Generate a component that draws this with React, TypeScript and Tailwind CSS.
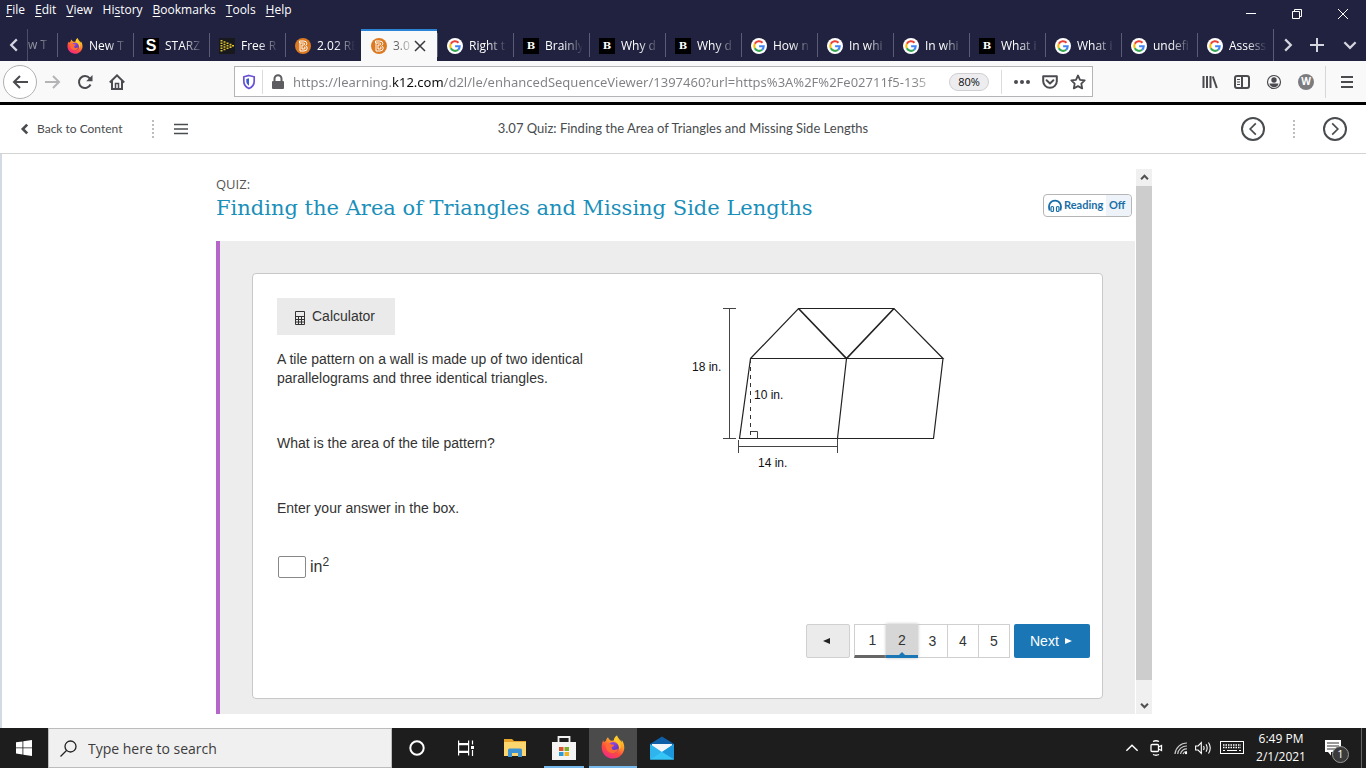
import React from 'react';

type IconName = 'firefox' | 'starz' | 'free' | 'brainorange' | 'google' | 'brainly';

function FirefoxIcon({ size }: { size: number }) {
  const id = `ff${size}`;
  return (
    <svg width={size} height={size} viewBox="0 0 24 24" aria-hidden="true" className="shrink-0">
      <defs>
        <linearGradient id={`${id}a`} x1="0.8" y1="0" x2="0.25" y2="1">
          <stop offset="0" stopColor="#ffe226" />
          <stop offset="0.35" stopColor="#ff9a2a" />
          <stop offset="0.65" stopColor="#ff4a3e" />
          <stop offset="1" stopColor="#f0278f" />
        </linearGradient>
        <linearGradient id={`${id}b`} x1="0" y1="0" x2="0.6" y2="1">
          <stop offset="0" stopColor="#a34be8" />
          <stop offset="1" stopColor="#5a35c0" />
        </linearGradient>
      </defs>
      <path
        d="M2.2 5.2c-1 2.3-1.600 4.600-1.500 7.300C.8 18.800 5.800 23.600 12 23.600S23.300 18.700 23.300 12.600c0-3.500-1.300-6-2.700-7.600l.3 2.300C19.700 4.700 17 3.600 16 .4c-1.800 1-3 3-3.200 5.200l-2.400.2C8.600 5 7.400 3.800 7 2.200 5.900 3 5.300 4.200 5 5.800L2.900 7.300z"
        fill={`url(#${id}a)`}
      />
      <circle cx="12.200" cy="12.600" r="5.600" fill={`url(#${id}b)`} />
      <path
        d="M4.300 9.300c2.200-1.600 4.600-1.400 5.900.1 1 .2 2.300 0 3 .5-.2 1.300-1.800 1.700-2.500 2.300-.3 1.700.9 2.900 2.700 2.700 1.600-.2 2.700-1 3.800-.5-1 2.600-3.100 3.900-5.600 3.800-4-.1-6.900-3-7.300-8.900z"
        fill="#ff6a35"
      />
      <path d="M16 .4c-.8 4 3.600 5.600 3.700 10.200.1 2.200-.8 3.500-1.600 4.300 1-4.300-1.500-7.600-5.300-9.300C13 3.400 14.200 1.400 16 .4z" fill="#ffc92b" />
    </svg>
  );
}

function TabIcon({ name }: { name: IconName }) {
  switch (name) {
    case 'firefox':
      return <FirefoxIcon size={16} />;
    case 'google':
      return (
        <svg width="16" height="16" viewBox="0 0 16 16" aria-hidden="true" className="shrink-0">
          <circle cx="8" cy="8" r="8" fill="#fff" />
          <g fill="none" strokeWidth="2.100">
            <path d="M11.500 4.700A4.800 4.800 0 0 0 3.800 5.700" stroke="#ea4335" />
            <path d="M3.800 5.700a4.800 4.800 0 0 0 0 4.600" stroke="#fbbc05" />
            <path d="M3.800 10.300a4.800 4.800 0 0 0 7.300 1.400" stroke="#34a853" />
            <path d="M11.100 11.700A4.800 4.800 0 0 0 12.700 8.200H8.100" stroke="#4285f4" />
          </g>
        </svg>
      );
    case 'starz':
      return (
        <span className="flex h-4 w-4 shrink-0 items-center justify-center bg-black font-['Liberation_Sans',Arial,sans-serif] text-[16px] leading-4 font-bold text-white">
          S
        </span>
      );
    case 'brainly':
      return (
        <span className="flex h-4 w-4 shrink-0 items-center justify-center bg-black font-['DejaVu_Serif',serif] text-[10px] leading-4 font-bold text-white">
          B
        </span>
      );
    case 'brainorange':
      return (
        <svg width="16" height="16" viewBox="0 0 16 16" aria-hidden="true" className="shrink-0">
          <circle cx="8" cy="8" r="8" fill="#dc7a22" />
          <path
            d="M4.500 5V3h4.300q3 0 3 2.500 0 1.500-1.200 2.200 1.600.8 1.600 2.500 0 2.800-3.200 2.800H5V5h3.600q1 0 1 1t-1 1H7v4h2q1.200 0 1.200-1T9 9"
            fill="none"
            stroke="#fff"
            strokeWidth="1"
          />
        </svg>
      );
    case 'free':
      return (
        <svg width="16" height="16" viewBox="0 0 16 16" aria-hidden="true" className="shrink-0">
          <rect width="16" height="16" fill="#17191d" />
          <path
            d="M2.500 2v12M5.500 3.200v9.600M8.500 4.500v7M11.500 5.800v4.500M14 7v2"
            stroke="#e0bf2c"
            strokeWidth="2"
            strokeDasharray="1.600 0.900"
          />
        </svg>
      );
  }
}

const tabs: { icon: IconName; label: string; active?: boolean }[] = [
  { icon: 'firefox', label: 'New T' },
  { icon: 'starz', label: 'STARZ' },
  { icon: 'free', label: 'Free R' },
  { icon: 'brainorange', label: '2.02 RE' },
  { icon: 'brainorange', label: '3.0', active: true },
  { icon: 'google', label: 'Right t' },
  { icon: 'brainly', label: 'Brainly' },
  { icon: 'brainly', label: 'Why d' },
  { icon: 'brainly', label: 'Why d' },
  { icon: 'google', label: 'How n' },
  { icon: 'google', label: 'In whi' },
  { icon: 'google', label: 'In whi' },
  { icon: 'brainly', label: 'What i' },
  { icon: 'google', label: 'What i' },
  { icon: 'google', label: 'undefi' },
  { icon: 'google', label: 'Assess' },
];

const menus = [
  ['', 'F', 'ile'],
  ['', 'E', 'dit'],
  ['', 'V', 'iew'],
  ['Hi', 's', 'tory'],
  ['', 'B', 'ookmarks'],
  ['', 'T', 'ools'],
  ['', 'H', 'elp'],
];

function Chevron({ dir, size, width = 2 }: { dir: 'left' | 'right' | 'up' | 'down'; size: number; width?: number }) {
  const d = {
    left: 'M10.500 3L5.500 8l5 5',
    right: 'M5.500 3l5 5-5 5',
    up: 'M3 10.500l5-5 5 5',
    down: 'M3 5.500l5 5 5-5',
  }[dir];
  return (
    <svg width={size} height={size} viewBox="0 0 16 16" fill="none" stroke="currentColor" strokeWidth={width} aria-hidden="true">
      <path d={d} />
    </svg>
  );
}

function TitleBar() {
  return (
    <div className="flex h-[29px] items-start justify-between text-white">
      <nav className="flex gap-[10px] pl-[6px] text-[12px] leading-5" aria-label="Menu bar">
        {menus.map(([pre, key, post]) => (
          <button key={key + post} type="button">
            {pre}
            <span className="underline underline-offset-2">{key}</span>
            {post}
          </button>
        ))}
      </nav>
      <div className="flex h-7">
        <button type="button" aria-label="Minimize" className="flex w-[46px] items-center justify-center">
          <svg width="10" height="10" viewBox="0 0 10 10" stroke="#fff"><path d="M0 4.500h10" /></svg>
        </button>
        <button type="button" aria-label="Restore" className="flex w-[46px] items-center justify-center">
          <svg width="10" height="10" viewBox="0 0 10 10" stroke="#fff" fill="none"><path d="M.5 2.500h7v7h-7zM2.500 2.500v-2h7v7h-2" /></svg>
        </button>
        <button type="button" aria-label="Close" className="flex w-[46px] items-center justify-center">
          <svg width="10" height="10" viewBox="0 0 10 10" stroke="#fff"><path d="M0 0l10 10M10 0L0 10" /></svg>
        </button>
      </div>
    </div>
  );
}

function TabStrip() {
  return (
    <div className="flex h-8 text-[12px] text-white">
      <button type="button" aria-label="Scroll tabs left" className="flex w-7 items-center justify-center border-r border-[#4c4e68] text-[#d5d5df]">
        <Chevron dir="left" size={18} />
      </button>
      <button type="button" className="flex w-[29px] items-center whitespace-nowrap mask-[linear-gradient(to_right,#0006,#0009_40%,transparent_75%)]">
        w T
      </button>
      <div className="flex min-w-0 flex-1">
        {tabs.map((tab, i) =>
          tab.active ? (
            <div key={i} className="flex max-w-[76px] min-w-0 flex-1 items-center border-t-2 border-[#2b83d6] bg-[#f9f9fa] pl-[10px] text-[#38383d]">
              <TabIcon name={tab.icon} />
              <button type="button" className="ml-[6px] w-[18px] text-left whitespace-nowrap mask-[linear-gradient(to_right,#000c_20%,#0003)]">
                {tab.label}
              </button>
              <button type="button" aria-label="Close tab" className="ml-[3px]">
                <svg width="12" height="12" viewBox="0 0 12 12" stroke="#38383d" strokeWidth="1.500"><path d="M1 1l10 10M11 1L1 11" /></svg>
              </button>
            </div>
          ) : (
            <button
              key={i}
              type="button"
              className="flex max-w-[76px] min-w-0 flex-1 items-center gap-[6px] bg-[linear-gradient(#5a5c76,#5a5c76)] bg-[length:1px_24px] bg-[position:0_4px] bg-no-repeat pt-px pl-[10px]"
            >
              <TabIcon name={tab.icon} />
              <span className="min-w-0 flex-1 text-left whitespace-nowrap mask-[linear-gradient(to_right,black_18px,transparent_38px)]">
                {tab.label}
              </span>
            </button>
          ),
        )}
      </div>
      <div className="flex w-[93px] items-center border-l border-[#5a5c76] pl-[5px] text-[#d5d5df]">
        <button type="button" aria-label="Scroll tabs right"><Chevron dir="right" size={18} /></button>
        <button type="button" aria-label="New tab" className="ml-[13px]">
          <svg width="14" height="14" viewBox="0 0 14 14" stroke="currentColor" strokeWidth="2"><path d="M0 7h14M7 0v14" /></svg>
        </button>
        <button type="button" aria-label="List all tabs" className="ml-[17px]"><Chevron dir="down" size={18} /></button>
      </div>
    </div>
  );
}

function NavBar() {
  return (
    <div className="flex h-[41px] items-center bg-[#f9f9fa] text-[#4a4a4f]">
      <div className="flex w-[234px] shrink-0 items-center pl-[3px]">
        <button type="button" aria-label="Back" className="flex h-[34px] w-[34px] items-center justify-center rounded-full border border-[#b1b1b5] bg-white">
          <svg width="16" height="16" viewBox="0 0 16 16" fill="none" stroke="currentColor" strokeWidth="2"><path d="M16 8H2M8 2L2 8l6 6" /></svg>
        </button>
        <button type="button" aria-label="Forward" className="ml-2 text-[#b5b5b8]">
          <svg width="16" height="16" viewBox="0 0 16 16" fill="none" stroke="currentColor" strokeWidth="2"><path d="M0 8h14M8 2l6 6-6 6" /></svg>
        </button>
        <button type="button" aria-label="Reload" className="ml-4">
          <svg width="16" height="16" viewBox="0 0 16 16" fill="none" stroke="currentColor" strokeWidth="2"><path d="M13.500 10.500A6 6 0 1 1 12.700 4.300L14 5.800" /><path d="M15.500 1v6.200H9.200z" fill="currentColor" stroke="none" /></svg>
        </button>
        <button type="button" aria-label="Home" className="ml-4">
          <svg width="16" height="16" viewBox="0 0 16 16" fill="none" stroke="currentColor" strokeWidth="2"><path d="M.8 8.500L8 1.400l7.200 7.100M3 7v8h10V7" /><path d="M6.500 14.500v-5h3v5" strokeWidth="1.500" /></svg>
        </button>
      </div>
      <div className="flex h-[31px] min-w-0 flex-1 items-center border border-[#b4b4b8] bg-white">
        <button type="button" aria-label="Tracking protection" className="flex h-6 w-7 items-center justify-center border-r border-[#dcdce0]">
          <svg width="14" height="16" viewBox="0 0 14 16" fill="none"><path d="M7 1.500l5.200 1.300v4.400c0 3.500-2.200 6-5.200 7.300-3-1.300-5.200-3.800-5.200-7.300V2.800z" stroke="#6950d6" strokeWidth="1.700" /><path d="M7 4.200l-2.700.7v2.400c0 2 1 3.400 2.700 4.400z" fill="#3a5bd0" /></svg>
        </button>
        <svg width="14" height="16" viewBox="0 0 14 16" className="ml-2 shrink-0" aria-hidden="true"><path d="M3.500 8V4.800a3.500 3.500 0 0 1 7 0V8" fill="none" stroke="#5c5c61" strokeWidth="2" /><rect x="1" y="7" width="12" height="8" rx="1" fill="#5c5c61" /></svg>
        <input
          aria-label="Address"
          defaultValue="https://learning.k12.com/d2l/le/enhancedSequenceViewer/1397460?url=https%3A%2F%2Fe02711f5-135"
          className="ml-2 h-7 min-w-0 flex-1 bg-[linear-gradient(to_right,#808084_98px,#0c0c0d_98px,#0c0c0d_150px,#808084_150px,#808084_620px,#fff_650px)] bg-clip-text font-['Noto_Sans',sans-serif] text-[13px] text-transparent outline-none"
        />
        <button type="button" className="ml-2 h-[18px] w-10 rounded-full border border-[#cfcfd3] bg-[#ededf0] text-[11px] leading-4 text-[#0c0c0d]">80%</button>
        <div className="ml-3 flex h-6 items-center border-l border-[#dcdce0] pl-3">
          <button type="button" aria-label="Page actions"><svg width="16" height="16" viewBox="0 0 16 16" fill="currentColor"><circle cx="2" cy="8" r="2" /><circle cx="8" cy="8" r="2" /><circle cx="14" cy="8" r="2" /></svg></button>
          <button type="button" aria-label="Save to Pocket" className="ml-3"><svg width="16" height="16" viewBox="0 0 16 16" fill="none" stroke="currentColor" strokeWidth="2"><path d="M1.200 2.300h13.600v5a6.800 6.500 0 0 1-13.600 0zM4.600 6.300L8 9.500l3.400-3.200" strokeLinejoin="round" strokeLinecap="round" /></svg></button>
          <button type="button" aria-label="Bookmark this page" className="mr-[6px] ml-3"><svg width="16" height="16" viewBox="0 0 16 16" fill="none" stroke="currentColor" strokeWidth="1.800"><path d="M8 1.500l2 4.300 4.700.6-3.400 3.200.9 4.800L8 12.100l-4.200 2.300.9-4.800L1.300 6.400 6 5.800z" strokeLinejoin="round" /></svg></button>
        </div>
      </div>
      <div className="flex w-[273px] shrink-0 items-center justify-end pr-3">
        <div className="flex items-center gap-4">
          <button type="button" aria-label="Library"><svg width="16" height="16" viewBox="0 0 16 16" stroke="currentColor" strokeWidth="2"><path d="M1.500 2v12M5 2v12M8.500 2v12M10.800 2.500l4 11.500" /></svg></button>
          <button type="button" aria-label="Sidebars"><svg width="16" height="16" viewBox="0 0 16 16" fill="none" stroke="currentColor" strokeWidth="2"><rect x="1" y="2" width="14" height="12" rx="2" /><path d="M8 2v12" /><path d="M3 5.500h3M3 8h3M3 10.500h3" strokeWidth="1" /></svg></button>
          <button type="button" aria-label="Account"><svg width="16" height="16" viewBox="0 0 16 16"><circle cx="8" cy="8" r="6.500" fill="none" stroke="currentColor" strokeWidth="1.200" /><circle cx="8" cy="6" r="2.700" fill="currentColor" /><path d="M3.500 9.500h9c-.4 2.500-2.200 3.700-4.500 3.700s-4.100-1.200-4.500-3.700z" fill="currentColor" /></svg></button>
          <button type="button" aria-label="Profile" className="flex h-4 w-4 items-center justify-center rounded-full bg-[#7c7c7f] text-[10px] font-bold text-white">W</button>
        </div>
        <div className="ml-[11px] flex h-8 items-center border-l border-[#d7d7db] pl-[14px]">
          <button type="button" aria-label="Open menu"><svg width="14" height="14" viewBox="0 0 14 14" stroke="currentColor" strokeWidth="2"><path d="M1 2h12M1 7h12M1 12h12" /></svg></button>
        </div>
      </div>
    </div>
  );
}

function Dots() {
  return <span className="h-[18px] border-l-2 border-dotted border-[#bdbdbd]" aria-hidden="true" />;
}

function CourseHeader() {
  return (
    <header className="grid h-[49px] grid-cols-[1fr_auto_1fr] items-center border-b border-[#d3d3d3] bg-white font-['Lato',sans-serif] text-[#494c4e] shadow-[0_1px_4px_rgba(0,0,0,0.08)]">
      <div className="flex items-center pl-[18px]">
        <a href="#content" className="flex items-center gap-[5px] text-[12px]">
          <Chevron dir="left" size={14} width={3} />
          Back to Content
        </a>
        <span className="ml-[29px] flex"><Dots /></span>
        <button type="button" aria-label="Show outline" className="ml-5">
          <svg width="14" height="12" viewBox="0 0 14 12" stroke="currentColor" strokeWidth="1.500"><path d="M0 1.500h14M0 6h14M0 10.500h14" /></svg>
        </button>
      </div>
      <h1 className="text-[13px]">3.07 Quiz: Finding the Area of Triangles and Missing Side Lengths</h1>
      <div className="flex items-center justify-end gap-7 pr-[19px]">
        <button type="button" aria-label="Previous activity" className="flex h-6 w-6 items-center justify-center rounded-full border-2 border-[#494c4e]"><Chevron dir="left" size={18} width={1.500} /></button>
        <Dots />
        <button type="button" aria-label="Next activity" className="flex h-6 w-6 items-center justify-center rounded-full border-2 border-[#494c4e]"><Chevron dir="right" size={18} width={1.500} /></button>
      </div>
    </header>
  );
}

function TileFigure() {
  return (
    <svg width="280" height="184" viewBox="678 298 280 184" role="img" aria-label="Tile pattern" fill="none" stroke="#222" strokeWidth="1.200">
      <path d="M750.500 358.500L798.500 308.500H894L943 358.500H750.500L739.500 438.500H933.500L943 358.500M846.500 358.500L837.500 438.500" />
      <path d="M798.500 308.500L846.500 358.500L894 308.500" strokeWidth="1.700" />
      <path d="M723 308.500h13M723 438.500h13M729.500 308.500v130M738.500 440v13M837.500 438.500v14.500M738.500 446.500h99M750.500 431.500h7v7" strokeWidth="1" stroke="#444" />
      <path d="M750.500 359v80" strokeWidth="1" strokeDasharray="4 4" stroke="#333" />
      <g fill="#111" stroke="none" className="font-['Liberation_Sans',Arial,sans-serif] text-[12px]">
        <text x="692" y="371">18 in.</text>
        <text x="754" y="399">10 in.</text>
        <text x="758" y="467">14 in.</text>
      </g>
    </svg>
  );
}

function Pager() {
  return (
    <nav className="flex h-[34px] justify-end gap-1 pr-3 text-[14px] text-[#333]" aria-label="Questions">
      <button type="button" aria-label="Previous question" className="flex w-11 items-center justify-center rounded-xs border border-[#d0d0d0] bg-[#ebebeb] pr-1">
        <svg width="7" height="6" viewBox="0 0 7 6" fill="#222"><path d="M7 0v6L0 3z" /></svg>
      </button>
      <div className="flex">
        <button type="button" className="w-8 border border-r-0 border-b-3 border-[#d0d0d0] border-b-[#666] pt-px pl-1">1</button>
        <button type="button" aria-current="page" className="relative w-8 border-b-3 border-[#1a76b4] bg-[#d6d6d6] pt-[2px] shadow-[0_0_3px_#bbb]">
          2
          <svg width="6" height="3" viewBox="0 0 6 3" fill="#1a76b4" className="absolute bottom-0 left-[13px]" aria-hidden="true"><path d="M0 3l3-3 3 3z" /></svg>
        </button>
        <button type="button" className="w-[30px] border border-l-0 border-[#d0d0d0]">3</button>
        <button type="button" className="w-[31px] border border-l-0 border-[#d0d0d0]">4</button>
        <button type="button" className="w-[31px] border border-l-0 border-[#d0d0d0]">5</button>
      </div>
      <button type="button" className="flex w-[76px] items-center gap-[6px] rounded-xs bg-[#1a76b4] pl-4 text-white">
        Next
        <svg width="7" height="6" viewBox="0 0 7 6" fill="#fff" aria-hidden="true"><path d="M0 0v6l7-3z" /></svg>
      </button>
    </nav>
  );
}

function QuizPage() {
  return (
    <main className="flex flex-1 flex-col border-l-2 border-[#d3dae4] bg-white pt-[15px] pb-[14px]">
      <div className="mx-auto flex w-full max-w-[936px] flex-1">
        <div className="flex min-w-0 flex-1 flex-col">
          <div className="flex h-[72px] items-start justify-between pr-1">
            <div>
              <p className="pt-[6px] font-['Open_Sans',sans-serif] text-[13px] leading-[18px] text-[#555]">QUIZ:</p>
              <h2 className="font-['DejaVu_Serif',serif] text-[21px] leading-[30px] text-[#1a8fba]">Finding the Area of Triangles and Missing Side Lengths</h2>
            </div>
            <button type="button" className="mt-[25px] flex h-[23px] w-[89px] items-center rounded-sm border border-[#b5b5b5] pl-1 font-['Lato',sans-serif] text-[11px] font-bold text-[#1a6ea8]">
              <svg width="14" height="14" viewBox="0 0 14 14" fill="none" stroke="currentColor" aria-hidden="true"><path d="M1.700 11.500C-.5 5.500 3 1.700 7 1.700s7.500 3.800 5.300 9.800" strokeWidth="1.800" /><rect x="3" y="7.500" width="2.500" height="5" rx="1" strokeWidth="1.200" /><rect x="8.500" y="7.500" width="2.500" height="5" rx="1" strokeWidth="1.200" /></svg>
              <span className="ml-[2px] flex-1 text-left">Reading</span>
              <span className="flex h-full w-[25px] items-center rounded-r-sm bg-[#edf3f9] pl-[3px]">Off</span>
            </button>
          </div>
          <div className="mr-px flex flex-1 border-l-4 border-[#b666c8] bg-[#ededed] px-8 pt-8 pb-[15px]">
            <section className="flex flex-1 flex-col rounded border border-[#c8c8c8] bg-white pb-10 text-[14px] leading-[19px] text-[#333]">
              <div className="grid grid-cols-2 p-6 pb-0">
                <div>
                  <button type="button" className="flex h-[37px] w-[118px] items-center gap-[7px] bg-[#eaeaea] pl-[18px]">
                    <svg width="10" height="14" viewBox="0 0 10 14" fill="none" stroke="#333" className="mt-[2px]" aria-hidden="true"><path d="M.5.5h9v13h-9zM.5 5.500h9M.5 8.500h9M.5 11h9M3.500 5.500v8M6.500 5.500v8" /></svg>
                    Calculator
                  </button>
                  <p className="mt-[15px] max-w-[320px]">A tile pattern on a wall is made up of two identical parallelograms and three identical triangles.</p>
                  <p className="mt-[46px]">What is the area of the tile pattern?</p>
                  <p className="mt-[46px]">Enter your answer in the box.</p>
                </div>
                <TileFigure />
              </div>
              <label className="mt-[38px] flex items-center gap-1 pl-[25px] text-[16px] leading-[22px]">
                <input aria-label="Area in square inches" className="h-[22px] w-7 rounded-xs border border-[#888] px-1 text-[14px]" />
                <span>in<sup className="text-[12px]">2</sup></span>
              </label>
              <div className="mt-auto"><Pager /></div>
            </section>
          </div>
        </div>
        <div className="flex w-4 flex-col bg-[#f0f0f0] text-[#505050]">
          <button type="button" aria-label="Scroll up" className="flex h-[17px] items-center justify-center"><Chevron dir="up" size={11} width={3} /></button>
          <div className="flex-1 bg-[#cdcdcd]" />
          <button type="button" aria-label="Scroll down" className="flex h-[34px] items-end justify-center pb-[3px]"><Chevron dir="down" size={11} width={3} /></button>
        </div>
      </div>
    </main>
  );
}

function Taskbar() {
  const cell = 'flex w-12 items-center justify-center';
  return (
    <footer className="flex h-10 bg-[#1d1d1d] font-['Open_Sans','Noto_Sans',sans-serif] text-white">
      <button type="button" aria-label="Start" className={cell}>
        <svg width="16" height="16" viewBox="0 0 16 16" fill="#fff"><path d="M0 2.300l6.500-.9v6.100H0zM7.300 1.300L16 0v7.500H7.300zM0 8.300h6.500v6.200L0 13.600zM7.300 8.300H16V16l-8.700-1.300z" /></svg>
      </button>
      <label className="flex w-[344px] items-center border border-[#bcbcbc] bg-[#f0f0f0] pl-[11px]">
        <svg width="17" height="17" viewBox="0 0 17 17" fill="none" stroke="#222" strokeWidth="1.300" aria-hidden="true"><circle cx="10.500" cy="6.500" r="5.500" /><path d="M6.500 10.500L.5 16.500" /></svg>
        <input aria-label="Search" placeholder="Type here to search" className="ml-[11px] min-w-0 flex-1 bg-transparent text-[14px] outline-none placeholder:text-[#3c3c3c]" />
      </label>
      <div className="flex gap-px pl-px">
        <button type="button" aria-label="Cortana" className={cell}><svg width="16" height="16" viewBox="0 0 16 16" fill="none" stroke="#fff" strokeWidth="2"><circle cx="8" cy="8" r="6.700" /></svg></button>
        <button type="button" aria-label="Task view" className={cell}><svg width="16" height="16" viewBox="0 0 16 16" fill="none" stroke="#fff" strokeWidth="1.200"><path d="M.6.500v3h10v-3M.6 4.600h10v6.800H.6zM.6 15.500v-3h10v3M14.500.500v4M14.500 10v6" /><path d="M14.500 6v3" strokeWidth="3" /></svg></button>
        <button type="button" aria-label="File Explorer" className={cell}><svg width="22" height="20" viewBox="0 0 22 20"><path d="M0 1h8l2 2h12v15H0z" fill="#e8a52b" /><path d="M0 4h22v14H0z" fill="#fbd66f" /><path d="M4 19v-7q0-1.500 1.500-1.500h11q1.500 0 1.500 1.500v7h-4v-4H8v4z" fill="#3d92d4" /></svg></button>
        <button type="button" aria-label="Microsoft Store" className={`${cell} bg-[linear-gradient(#76b9ed,#76b9ed)] bg-[length:40px_2px] bg-bottom bg-no-repeat`}><svg width="24" height="24" viewBox="0 0 24 24"><path d="M6.500 7V1h11v6" fill="none" stroke="#f2f2f2" strokeWidth="1.800" /><path d="M0 6h24v18H0z" fill="#f4f4f4" /><path d="M7 11h4.500v4H7z" fill="#d8532b" /><path d="M12.500 11H17v4h-4.500z" fill="#7cae2c" /><path d="M7 16h4.500v4H7z" fill="#2b9bd8" /><path d="M12.500 16H17v4h-4.500z" fill="#f0b323" /></svg></button>
        <button type="button" aria-label="Firefox" className={`${cell} border-b-2 border-[#76b9ed] bg-[#4b4b4b]`}><FirefoxIcon size={24} /></button>
        <button type="button" aria-label="Mail" className={cell}><svg width="24" height="24" viewBox="0 0 24 24"><path d="M0 8L12 .5 24 8v5H0z" fill="#0f5fa8" /><path d="M2 8h20v9H2z" fill="#f2f6fa" /><path d="M0 8l12 8 12-8v15.500H0z" fill="#2fb4ee" /><path d="M24 8v15.500L12 16z" fill="#1c97dc" /><path d="M0 23.500L12 16l12 7.500z" fill="#35c4f6" /></svg></button>
      </div>
      <div className="ml-auto flex items-center">
        <button type="button" aria-label="Show hidden icons"><Chevron dir="up" size={18} width={1.300} /></button>
        <svg width="14" height="16" viewBox="0 0 14 16" fill="none" stroke="#fff" strokeWidth="1.300" className="ml-2" aria-label="Meet now"><rect x="2" y="4.500" width="7.500" height="7" rx="1" /><path d="M9.500 7l3-1.500v5L9.500 9M4 1.500q3-1.500 6 0M4 14.500q3 1.500 6 0" /></svg>
        <svg width="14" height="14" viewBox="0 0 14 14" fill="none" stroke="#ccc" strokeWidth="1.200" className="ml-[11px]" aria-label="Network"><path d="M1 13A12 12 0 0 1 13 2M3.700 13A9 9 0 0 1 13 5M6.500 13A6 6 0 0 1 13 8M9 13a4 4 0 0 1 4-2.500" /><circle cx="12" cy="12" r="1.200" fill="#fff" stroke="none" /></svg>
        <svg width="17" height="14" viewBox="0 0 17 14" fill="none" stroke="#fff" strokeWidth="1.100" className="ml-[7px]" aria-label="Volume"><path d="M.6 5h2.500l3.200-3.300v10.600L3.100 9H.6zM8.500 5q1.200 2 0 4M11 3.200q2.300 3.800 0 7.600M13.500 1.500q3.500 5.500 0 11" /></svg>
        <svg width="24" height="14" viewBox="0 0 24 14" fill="none" stroke="#fff" className="ml-2" aria-label="Touch keyboard"><rect x=".5" y=".5" width="23" height="12" /><path d="M3 4h18M3 6.500h18" strokeWidth="1.300" strokeDasharray="1.500 1" /><path d="M3 9.500h2M7 9.500h10M19 9.500h2" /></svg>
        <div className="ml-[10px] w-[54px] text-center text-[12px] leading-[18px] whitespace-nowrap">
          <p>6:49 PM</p>
          <p>2/1/2021</p>
        </div>
        <button type="button" aria-label="Notifications, 1 new" className="relative ml-4 h-10 w-[26px]">
          <svg width="16" height="16" viewBox="0 0 16 16" className="absolute top-3 left-[1px]"><path d="M0 0h16v12H6v3.500L3 12H0z" fill="#fff" /><path d="M2 3h12M2 6h12M2 9h9" stroke="#333" /></svg>
          <span className="absolute top-[18px] left-2 flex h-[17px] w-[17px] items-center justify-center rounded-full border border-[#999] bg-[#3a3a3a] text-[11px]">1</span>
        </button>
        <span className="mr-1 ml-[11px] h-10 border-l border-[#666]" />
      </div>
    </footer>
  );
}

export default function App() {
  return (
    <div className="flex min-h-screen w-full flex-col bg-white font-['Liberation_Sans',Arial,sans-serif]">
      <div className="border-b-3 border-black bg-[#20223f] font-['Open_Sans','Noto_Sans',sans-serif]">
        <TitleBar />
        <TabStrip />
        <NavBar />
      </div>
      <CourseHeader />
      <QuizPage />
      <Taskbar />
    </div>
  );
}
